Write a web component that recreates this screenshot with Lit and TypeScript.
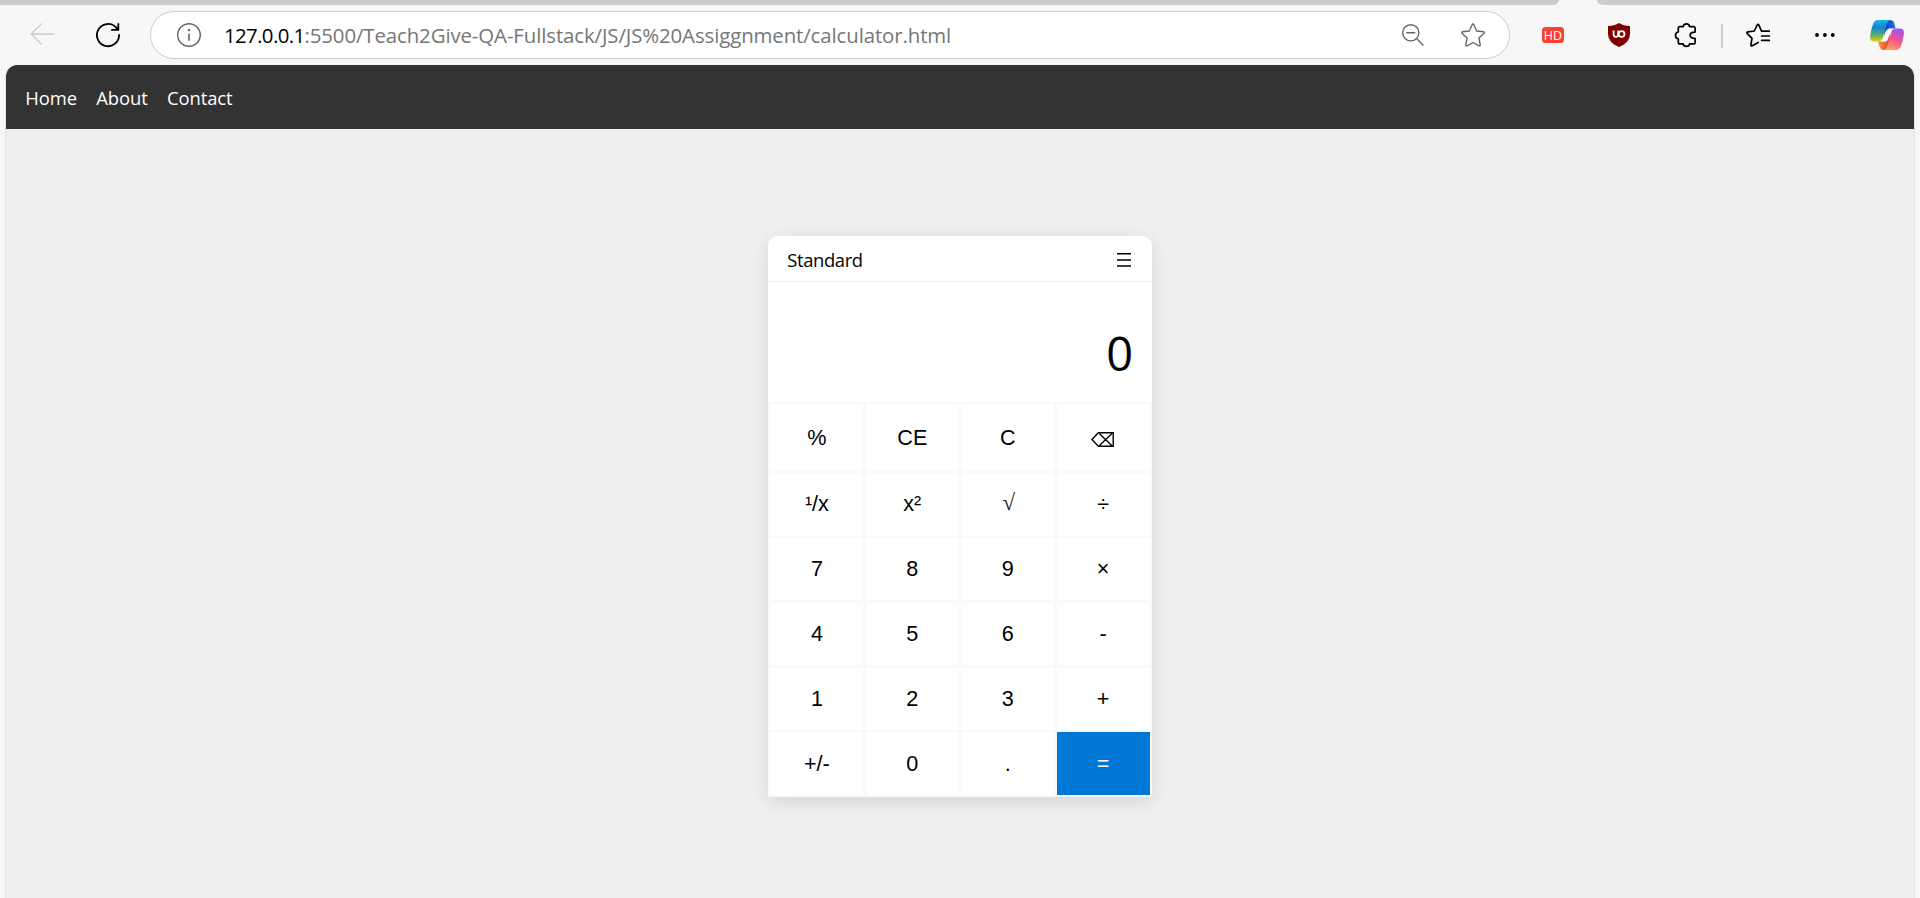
import { LitElement, html, css } from "lit";
import { customElement, state } from "lit/decorators.js";

@customElement("browser-bar")
class BrowserBar extends LitElement {
  static styles = css`
    :host { display: block; background: #f7f7f7; height: 65px; }
    svg { display: block; flex: none; overflow: visible; }
    .tabs { display: flex; height: 5px; }
    .strip { background: #ccc; height: 5px; }
    .strip.left { width: 1559px; border-bottom-right-radius: 6px 5px; }
    .strip.right { flex: 1; margin-left: 38px; border-bottom-left-radius: 6px 5px; }
    .bar { display: flex; align-items: flex-start; height: 60px; padding: 6px 16px 0 30px; box-sizing: border-box; }
    .back { margin: 12px 42px 0 0; }
    .reload { margin: 12px 30px 0 0; }
    .address {
      display: flex; align-items: center; box-sizing: border-box;
      width: 1360px; height: 48px; border: 1px solid #ccc; border-radius: 24px;
      background: #fff; padding: 0 24px 0 26px; flex: none;
    }
    .url {
      flex: 1; margin-left: 23px; white-space: nowrap;
      font: 20.4px/28px "Open Sans", sans-serif; letter-spacing: -0.1px; color: #767676;
    }
    .host { color: #000; letter-spacing: -0.62px; }
    .zoomout { margin-right: 37px; }
    .ext { display: flex; align-items: center; height: 48px; flex: 1; }
    .hd { margin-left: 32px; }
    .ub { margin-left: 44px; }
    .puzzle { margin-left: 44.5px; }
    .sep { width: 2px; height: 24px; background: #ccc; margin: 2px 0 0 24.5px; }
    .fav { margin-left: 23px; }
    .dots { margin-left: 45px; }
    .copilot { margin-left: 35px; }
    .hdtext { font: 12.5px "Open Sans", sans-serif; }
  `;
  render() {
    return html`
      <div class="tabs"><div class="strip left"></div><div class="strip right"></div></div>
      <div class="bar">
        <svg class="back" width="24" height="24" fill="none" stroke="#ccc" stroke-width="1.4" stroke-linecap="round" stroke-linejoin="round">
          <path d="M23.3 11H1M11.3 1 1 11 11.3 21" />
        </svg>
        <svg class="reload" width="24" height="24" fill="none" stroke="#000" stroke-width="1.8" stroke-linejoin="round" stroke-linecap="round">
          <path d="M23.1 12A11.1 11.1 0 1 1 20.2 4.6L22.2 6.8M22.3 1V6.9H15.9" />
        </svg>
        <div class="address">
          <svg width="24" height="24" fill="none" stroke="#666" stroke-width="1.4">
            <circle cx="12" cy="12" r="11.3" /><path d="M12 10.5V17.8" stroke-width="1.6" /><circle cx="12" cy="7" r="1.2" fill="#666" stroke="none" />
          </svg>
          <div class="url"><span class="host">127.0.0.1</span>:5500/Teach2Give-QA-Fullstack/JS/JS%20Assiggnment/calculator.html</div>
          <svg class="zoomout" width="22" height="22" fill="none" stroke="#666" stroke-width="1.4" stroke-linecap="round">
            <circle cx="8.8" cy="8.8" r="8.1" /><path d="M4.8 8.8H12.8M14.8 14.8 21 21" />
          </svg>
          <svg width="24" height="24" fill="none" stroke="#666" stroke-width="1.4" stroke-linejoin="round">
            <path d="M12 1Q12.6 1 13 2L15.7 8 22.4 8.8Q24 9.2 22.8 10.4L17.9 15 19.2 21.7Q19.3 23.2 18 22.8L12 19.5 6 22.8Q4.7 23.2 4.8 21.7L6.1 15 1.2 10.4Q0 9.2 1.6 8.8L8.3 8 11 2Q11.4 1 12 1Z" />
          </svg>
        </div>
        <div class="ext">
          <svg class="hd" width="22" height="16">
            <rect width="22" height="16" rx="3.5" fill="#f94134" />
            <text class="hdtext" x="11" y="12.6" text-anchor="middle" fill="#fff">HD</text>
          </svg>
          <svg class="ub" width="22" height="24">
            <path d="M11 0Q15.5 3 22 3V11Q22 19.5 11 24 0 19.5 0 11V3Q6.5 3 11 0Z" fill="#800000" />
            <path d="M5.6 7.5V11.2Q5.6 13.8 7.9 13.8 10.2 13.8 10.2 11.2V7.5" fill="none" stroke="#fff" stroke-width="1.8" />
            <circle cx="13.6" cy="11" r="2.9" fill="none" stroke="#fff" stroke-width="1.8" />
          </svg>
          <svg class="puzzle" width="22" height="24" fill="none" stroke="#000" stroke-width="1.7" stroke-linejoin="round">
            <path d="M5 3.6H8.2C8.7-.1 14.1-.1 14.6 3.6H18.4Q20.1 3.6 20.1 5.3V9.1C13.4 8.8 13.4 15.8 20.1 15.4V19.2Q20.1 20.9 18.4 20.9H14.6C14.1 24.3 8.7 24.3 8.2 20.9H5Q3.3 20.9 3.3 19.2V15.8C-.4 15.3-.4 9.5 3.3 9V5.3Q3.3 3.6 5 3.6Z" />
          </svg>
          <div class="sep"></div>
          <svg class="fav" width="24" height="24" fill="none" stroke="#000" stroke-width="1.7" stroke-linejoin="round" stroke-linecap="round">
            <path d="M15.3 7.6 12.9 2.2Q12 .6 11.1 2.2L8.3 8 1.8 8.9Q.2 9.4 1.3 10.6L6 15.3 4.9 21.7Q4.8 23.3 6.2 22.7L12.2 19.4M15.6 8.2H23.3M15.6 13H23.3M15.6 17.4H23.3" />
          </svg>
          <svg class="dots" width="20" height="4"><circle cx="2" cy="2" r="1.9" /><circle cx="9.9" cy="2" r="1.9" /><circle cx="17.8" cy="2" r="1.9" /></svg>
          <svg class="copilot" width="34" height="30">
            <defs>
              <linearGradient id="a" x1="0" y1="0" x2="0" y2="1"><stop offset="0" stop-color="#20b0ee" /><stop offset=".35" stop-color="#1683d0" /><stop offset=".7" stop-color="#55b56a" /><stop offset="1" stop-color="#f5cc08" /></linearGradient>
              <linearGradient id="b" x1=".7" y1="0" x2=".3" y2="1"><stop offset="0" stop-color="#a650ee" /><stop offset=".5" stop-color="#ee5592" /><stop offset="1" stop-color="#ffa45e" /></linearGradient>
              <linearGradient id="c"><stop offset="0" stop-color="#1038b0" /><stop offset="1" stop-color="#2375e8" /></linearGradient>
              <linearGradient id="d"><stop offset="0" stop-color="#f99a35" /><stop offset="1" stop-color="#e03a3c" /></linearGradient>
            </defs>
            <path d="M15 0H20Q23.3 0 24.3 3.4L25.6 8.5H20Q16.5 8.5 15 13L14 16Z" fill="url(#c)" />
            <path d="M19 30H13.5Q10.5 30 9.5 26.6L8 21.5H13.5Q16.5 21.5 18 17L20 14Z" fill="url(#d)" />
            <path d="M19.5 8.7H21.6L17.6 20Q17 21.5 15.5 21.5H12Z" fill="#f7f7f7" />
            <path d="M8 0H21Q17.8.4 16.8 4L12.8 18Q11.5 21.6 8 21.6H4Q-.8 21.6 .2 15.5 1.2 9 3 4 4.5 0 8 0Z" fill="url(#a)" />
            <path d="M26 30H13.5Q16.4 29.6 17.4 26L21.2 12.2Q22.5 8.5 26 8.5H30Q34.8 8.5 33.8 14.5 32.8 21 31 26 29.5 30 26 30Z" fill="url(#b)" />
          </svg>
        </div>
      </div>`;
  }
}

@customElement("calc-pad")
class CalcPad extends LitElement {
  @state() private value = "0";
  private keys = ["%", "CE", "C", "⌫", "¹/x", "x²", "√", "÷", "7", "8", "9", "×", "4", "5", "6", "-", "1", "2", "3", "+", "+/-", "0", ".", "="];
  static styles = css`
    :host {
      display: block; width: 384px; height: 561px; overflow: hidden; background: #fff;
      border-radius: 9.6px 9.6px 0 0; box-shadow: 0 4.8px 18px rgba(0, 0, 0, 0.1);
      font-family: "Open Sans", sans-serif; color: #000;
    }
    .head {
      display: flex; justify-content: space-between; align-items: center; box-sizing: border-box;
      height: 46px; padding: 2px 20px 0 19.2px; border-bottom: 1px solid #eee;
      font-size: 18.4px; letter-spacing: -0.35px;
    }
    .menu { display: block; }
    .display {
      box-sizing: border-box; height: 120px; padding: 39px 19px 0; text-align: right;
      font-size: 47px; line-height: 64px;
    }
    .keys {
      display: grid; box-sizing: border-box; height: 395px; padding: 2.4px; gap: 2.4px; background: #f9f9f9;
      grid-template-columns: repeat(4, 1fr); grid-template-rows: 66.4px repeat(5, 62.4px);
    }
    .key {
      display: flex; align-items: center; justify-content: center; border: 0; padding: 0;
      background: #fff; color: #000; font: 21.6px "Liberation Sans", sans-serif;
    }
    .key:nth-child(n + 21) { padding-top: 1px; }
    .equals { background: #0078d7; color: #fff; }
    .root { font: 23px "Liberation Serif", serif; padding: 0 0 3px 2px; color: #222; }
    .erase { display: block; margin: 4px 2px 0 0; }
  `;
  private face(k: string) {
    return k === "⌫"
      ? html`<svg class="erase" width="23" height="15" fill="none" stroke="#000" stroke-width="1.4"><path d="M7.3 .8H22.2V14.3H7.3L.9 7.5ZM8.4 1.8 20.8 13.4M20.8 1.8 8.4 13.4" /></svg>`
      : k;
  }
  render() {
    return html`
      <div class="head"><span>Standard</span>
        <svg class="menu" width="15" height="15"><path d="M0 1H14V2.5H0ZM0 7.3H14V8.8H0ZM0 13.3H14V14.8H0Z" /></svg>
      </div>
      <div class="display">${this.value}</div>
      <div class="keys">
        ${this.keys.map((k) => html`<button class="key ${k === "=" ? "equals" : k === "√" ? "root" : ""}">${this.face(k)}</button>`)}
      </div>`;
  }
}

@customElement("app-root")
class AppRoot extends LitElement {
  static styles = css`
    :host { display: block; height: 898px; background: #f7f7f7; overflow: hidden; }
    .page {
      box-sizing: border-box; height: 833px; margin: 0 5px; border: solid #e3e3e3; border-width: 0 1px;
      background: #efefef; border-radius: 12px 12px 0 0; overflow: hidden;
    }
    .nav {
      display: flex; align-items: center; gap: 19.2px; box-sizing: border-box; height: 64px;
      padding: 0 19.2px; background: #333; color: #fff;
      font: 18.4px "Open Sans", sans-serif; letter-spacing: -0.05px;
    }
    .stage { display: flex; justify-content: center; padding-top: 107px; }
  `;
  render() {
    return html`
      <browser-bar></browser-bar>
      <div class="page">
        <nav class="nav"><span>Home</span><span>About</span><span>Contact</span></nav>
        <main class="stage"><calc-pad></calc-pad></main>
      </div>`;
  }
}
